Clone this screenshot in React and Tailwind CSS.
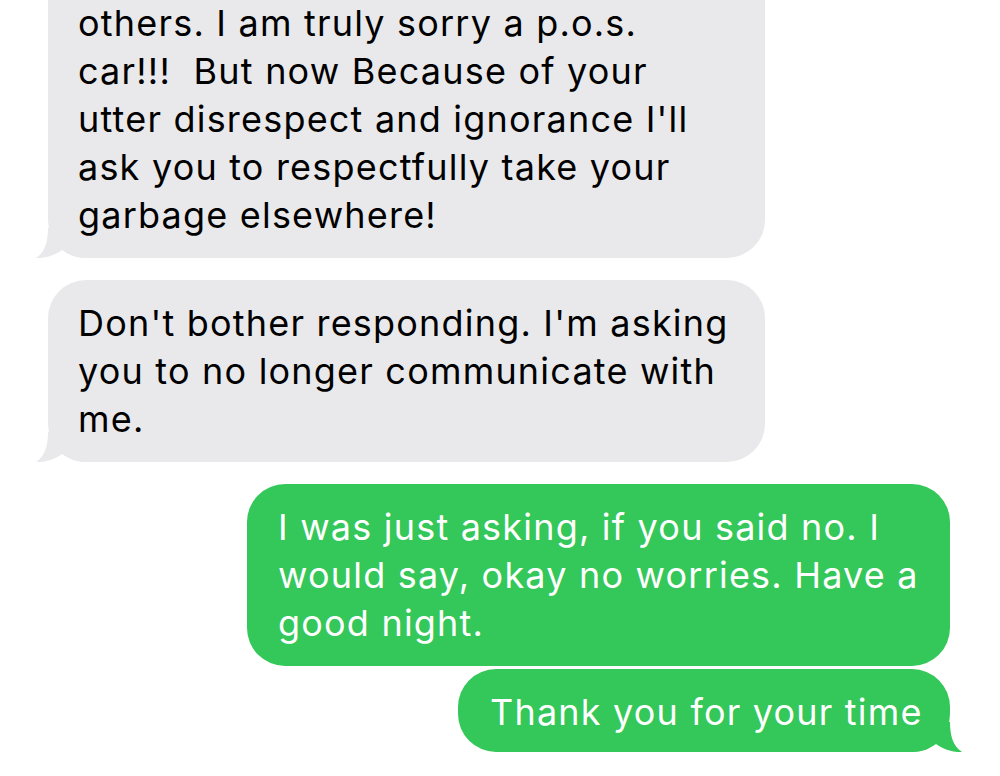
import React from "react";

function GrayTail() {
  return (
    <svg className="absolute left-[-12px] bottom-0" width="52" height="30" viewBox="0 0 52 30">
      <path d="M12,0 C12,14 9,24 0,30 C8,30.5 18,28 26,22 C33,27 40,30 50,30 L50,0 Z" fill="#e9e9eb" />
    </svg>
  );
}

function GreenTail() {
  return (
    <svg className="absolute right-[-12px] bottom-0" width="52" height="30" viewBox="0 0 52 30">
      <path d="M40,0 C40,14 43,24 52,30 C44,30.5 34,28 26,22 C19,27 12,30 2,30 L2,0 Z" fill="#34c759" />
    </svg>
  );
}

export default function App() {
  return (
    <div
      className="w-[1000px] h-[776px] bg-white overflow-hidden"
      style={{ fontFamily: "Inter, 'Liberation Sans', sans-serif" }}
    >
      <div className="flex flex-col text-[36px] leading-[48px] tracking-[1.2px]">
        <div className="relative ml-[48px] w-[717px] -mt-[60px] pt-[59px] pb-[19px] pl-[30px] rounded-[38px] bg-[#e9e9eb] text-black whitespace-nowrap">
          <GrayTail />
          <p className="relative">
            others. I am truly sorry a p.o.s.
            <br />
            car!!!&nbsp; But now Because of your
            <br />
            utter disrespect and ignorance I'll
            <br />
            ask you to respectfully take your
            <br />
            garbage elsewhere!
          </p>
        </div>
        <div className="relative ml-[48px] mt-[22px] w-[717px] pt-[19px] pb-[19px] pl-[30px] rounded-[38px] bg-[#e9e9eb] text-black whitespace-nowrap">
          <GrayTail />
          <p className="relative">
            Don't bother responding. I'm asking
            <br />
            you to no longer communicate with
            <br />
            me.
          </p>
        </div>
        <div className="relative self-end mr-[50px] mt-[22px] w-[703px] pt-[19px] pb-[19px] pl-[31px] rounded-[38px] bg-[#34c759] text-white whitespace-nowrap">
          <p className="relative">
            I was just asking, if you said no. I
            <br />
            would say, okay no worries. Have a
            <br />
            good night.
          </p>
        </div>
        <div className="relative self-end mr-[50px] mt-[3px] w-[492px] pt-[19px] pb-[16px] pl-[32px] rounded-[38px] bg-[#34c759] text-white whitespace-nowrap">
          <GreenTail />
          <p className="relative">Thank you for your time</p>
        </div>
      </div>
    </div>
  );
}
